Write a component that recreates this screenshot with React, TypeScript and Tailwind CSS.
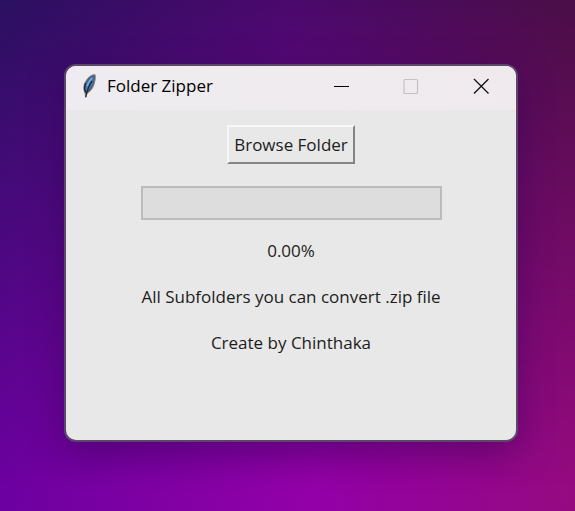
import React from "react";

function FeatherIcon() {
  return (
    <svg width="16" height="26" viewBox="0 0 16 26" aria-hidden="true">
      <path d="M14 1.500C10 1.500 5.500 5.500 3.500 11C2.300 14.500 2.500 17 4 20L4.700 24.500L6 20.500C9 19 12 15 13 11.500C14 8 14.800 5 14 1.500Z" fill="#55585d" stroke="#8c8c90" strokeWidth="1" />
      <path d="M12.500 3C9 5 6 8.500 4.500 12.500C3.800 15 4 17 5 18.500C8 17 10.500 14 11.500 11C12.500 8 13 5.500 12.500 3Z" fill="#3b7cc4" />
      <path d="M11 5C8.500 7.500 7 10 6 13" fill="none" stroke="#7fb2e6" strokeWidth="1.200" />
      <path d="M4.500 10C3.500 13 3.300 16.500 4.500 19.500M11 8C9 11 6.500 14.500 4.800 24" fill="none" stroke="#1d222a" strokeWidth="1.200" />
    </svg>
  );
}

function TitleBar() {
  return (
    <header className="flex h-11 items-center justify-between bg-gradient-to-r from-[#eeecf0] to-[#f0eaee] pb-1 pl-[15px] text-black">
      <div className="flex items-center gap-[10px]">
        <FeatherIcon />
        <h1 className="text-[17px] leading-6">Folder Zipper</h1>
      </div>
      <div className="flex h-full">
        <button type="button" aria-label="Minimize" className="flex w-[70px] items-center justify-center">
          <svg width="16" height="16" viewBox="0 0 16 16" shapeRendering="crispEdges">
            <path d="M1 8.500H16" stroke="#000" />
          </svg>
        </button>
        <button type="button" aria-label="Maximize" disabled className="flex w-[70px] items-center justify-center">
          <svg width="16" height="16" viewBox="0 0 16 16">
            <rect x="1" y="1.500" width="13.500" height="14" rx="1" fill="none" stroke="#c4c0c4" strokeWidth="1.200" />
          </svg>
        </button>
        <button type="button" aria-label="Close" className="flex w-[70px] items-center justify-center">
          <svg width="16" height="16" viewBox="0 0 16 16">
            <path d="M1 1L15.500 15.500M15.500 1L1 15.500" stroke="#111" strokeWidth="1.300" />
          </svg>
        </button>
      </div>
    </header>
  );
}

export default function App() {
  return (
    <main className="relative isolate flex min-h-screen flex-col bg-[linear-gradient(to_right,#6c00a0,#9400a8_55%,#960a80)] pt-16 pr-[57px] pb-[69px] pl-16 font-['Open_Sans','Noto_Sans',sans-serif]">
      <div aria-hidden="true" className="absolute inset-0 -z-10 bg-[linear-gradient(to_right,#2b1060,#4a086c_50%,#4a0e46)] [mask-image:linear-gradient(to_bottom,black,transparent_95%)]" />
      <section className="flex grow flex-col overflow-hidden rounded-xl border-2 border-[#5d4769] bg-[#e8e8e8] shadow-[0_12px_36px_#2a004a70]">
        <TitleBar />
        <div className="flex flex-col items-center px-4 pt-[15px] pb-8 text-[17px] leading-6 text-[#1c1c1c]">
          <button type="button" className="h-[39px] w-32 border-2 border-t-[#f8f8f8] border-r-[#858585] border-b-[#858585] border-l-[#f8f8f8] whitespace-nowrap">
            Browse Folder
          </button>
          <div role="progressbar" aria-label="Zip progress" aria-valuemin={0} aria-valuemax={100} aria-valuenow={0} className="mt-[22px] h-[34px] w-full max-w-[301px] border-2 border-[#bcbcbc] bg-[#dddddd]" />
          <p className="mt-[19px]">0.00%</p>
          <p className="mt-[22px]">All Subfolders you can convert .zip file</p>
          <p className="mt-[22px]">Create by Chinthaka</p>
        </div>
      </section>
    </main>
  );
}
